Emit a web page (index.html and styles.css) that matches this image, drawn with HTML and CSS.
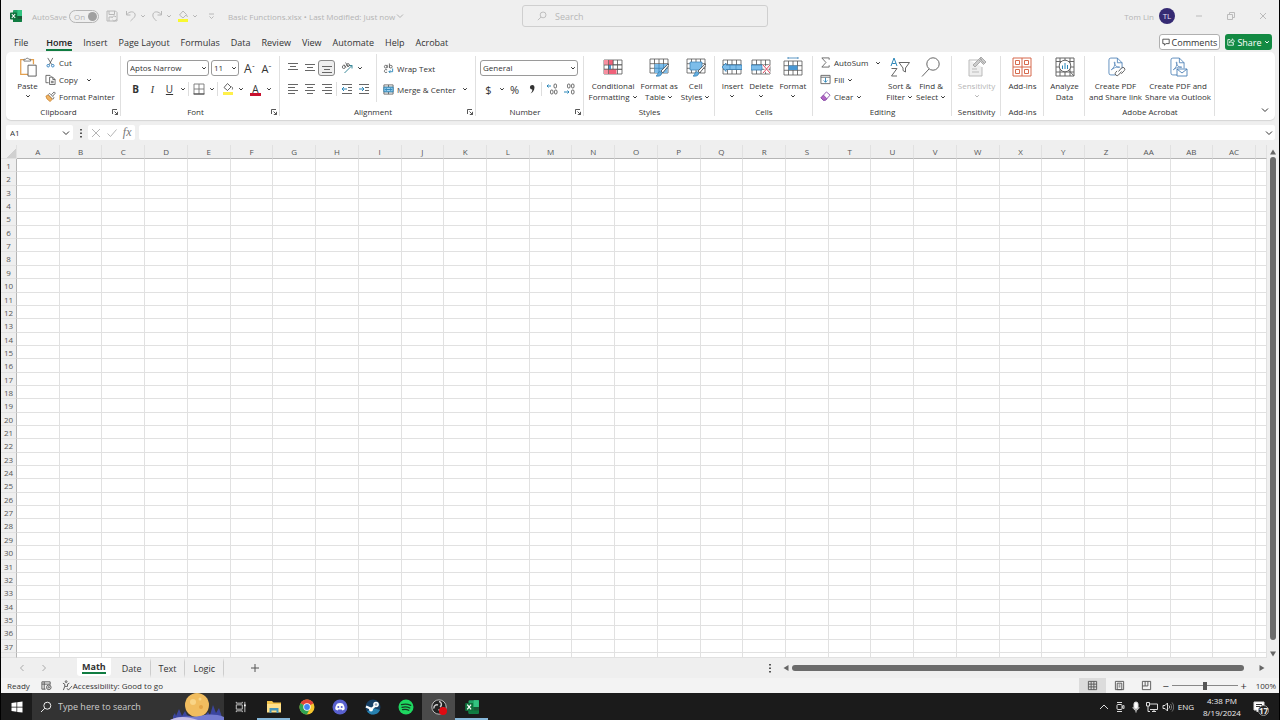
FILE: index.html
```html
<!DOCTYPE html>
<html lang="en">
<head>
    <meta charset="UTF-8">
    <meta name="viewport" content="width=device-width, initial-scale=1.0">
    <title>Basic Functions.xlsx</title>
    <link rel="stylesheet" href="styles.css">
</head>
<body>

    <!-- Shared icons -->
    <svg class="sprite" aria-hidden="true">
        <symbol id="caret" viewBox="0 0 6 6"><path d="M1.2 2.2 3 4l1.800-1.800" fill="none" stroke="currentColor"/></symbol>
        <symbol id="chevron" viewBox="0 0 10 10"><path d="M2 3.500 5 6.500 8 3.500" fill="none" stroke="currentColor"/></symbol>
        <symbol id="launcher" viewBox="0 0 8 8"><path d="M1.500 6V1.500H6M3.500 3.500 6.500 6.500M6.500 3.800V6.500H3.800" fill="none" stroke="#444" stroke-width=".9"/></symbol>
        <symbol id="xl" viewBox="0 0 14 14"><rect x="4" y="1" width="9" height="12" rx="1" fill="#21a366"/><path d="M8.500 1H13v6H8.500z" fill="#33c481"/><path d="M4 7h9v5a1 1 0 0 1-1 1H4z" fill="#107c41"/><path d="M8.500 7H13v3H8.500z" fill="#185c37"/><rect x="1" y="3.500" width="7" height="7" rx=".8" fill="#0f703b"/><path d="m2.800 5 3.400 4M6.200 5 2.800 9" stroke="#fff" stroke-width="1.100"/></symbol>
        <symbol id="lens" viewBox="0 0 12 12"><circle cx="7.300" cy="4.700" r="3.500" fill="none" stroke="currentColor"/><path d="M4.800 7.300 1 11" stroke="currentColor"/></symbol>
        <symbol id="table" viewBox="0 0 20 18"><path d="M1 2h18v14H1zM1 6.700h18M1 11.300h18M5.500 2v14M14.500 2v14M10 2v14" fill="#fff" stroke="#555" stroke-width=".8"/></symbol>
        <symbol id="brush" viewBox="0 0 14 14"><path d="M13.300.8 6 8l1.800 1.800 6-7.300z" fill="#fff" stroke="#444" stroke-width=".8"/><path d="M1 13c1.500-.6 1.500-2.500 2.500-3.800C5 8 7 9.300 6.500 11 6 13 3.500 13.500 1 13z" fill="#68b0e0" stroke="#2878b0" stroke-width=".7"/></symbol>
        <symbol id="pdf" viewBox="0 0 16 20"><path d="M8 19H3a2 2 0 0 1-2-2V3a2 2 0 0 1 2-2h7l5 5v6M10 1v5h5" fill="none" stroke="#4b7fb5" stroke-width=".9"/><path d="M3.500 13.500C6 12 8 8 7.300 5.500 6.500 4 6 7 9 10c1 1 3 1.500 3.500.8.3-1-4.500-.7-9 2.700z" fill="none" stroke="#4b7fb5" stroke-width=".8"/></symbol>
    </svg>

    <div class="window">

        <header class="titlebar">
            <div class="title-left">
                <svg class="logo" viewBox="0 0 14 14"><use href="#xl"/></svg>
                <label class="autosave">AutoSave
                    <span class="switch"><input type="checkbox" checked><span>On</span></span>
                </label>
                <button class="qat" aria-label="Save"><svg viewBox="0 0 12 12"><path d="M1 1h8.500L11 2.500V11H1zM3 1v3.500h5.500V1M3 11V7h3" /><path d="M6 8a2.200 2.200 0 0 1 4-1M10.500 9a2.200 2.200 0 0 1-4 1"/></svg></button>
                <button class="qat wide" aria-label="Undo"><svg viewBox="0 0 12 12"><path d="M1.500 1v4h4M1.500 5C4 1 9 1 10 4c.8 3-2 4.500-4.500 7"/></svg><svg class="caret"><use href="#caret"/></svg></button>
                <button class="qat wide" aria-label="Redo"><svg viewBox="0 0 12 12"><path d="M10.500 1v4h-4M10.500 5C8 1 3 1 2 4c-.8 3 1 4.500 3.500 7"/></svg><svg class="caret"><use href="#caret"/></svg></button>
                <button class="qat wide" aria-label="Fill color"><svg viewBox="0 0 12 12"><path d="M6 1 2.500 5 6 8l3.500-3.500zM9.500 5l1 2"/><path d="M1 10.500h10" class="yellow"/></svg><svg class="caret"><use href="#caret"/></svg></button>
                <button class="qat" aria-label="Customize"><svg viewBox="0 0 12 12"><path d="M3 4h5M3.500 6.500l2 2 2-2"/></svg></button>
                <span class="filename">Basic Functions.xlsx • Last Modified: Just now</span>
                <svg class="chev"><use href="#chevron"/></svg>
            </div>
            <label class="search"><svg><use href="#lens"/></svg><input type="text" placeholder="Search" aria-label="Search"></label>
            <div class="title-right">
                <span>Tom Lin</span>
                <span class="avatar">TL</span>
                <button aria-label="Minimize"><svg viewBox="0 0 10 10"><path d="M2 5h6"/></svg></button>
                <button aria-label="Restore"><svg viewBox="0 0 10 10"><path d="M1.500 3.500h5v5h-5zM3.500 3V1.500h5v5H7"/></svg></button>
                <button aria-label="Close"><svg viewBox="0 0 10 10"><path d="m2 2 6 6M8 2 2 8"/></svg></button>
            </div>
        </header>

        <nav class="menu">
            <a href="#" class="file">File</a>
            <a href="#" class="active">Home</a>
            <a href="#">Insert</a>
            <a href="#">Page Layout</a>
            <a href="#">Formulas</a>
            <a href="#">Data</a>
            <a href="#">Review</a>
            <a href="#">View</a>
            <a href="#">Automate</a>
            <a href="#">Help</a>
            <a href="#">Acrobat</a>
            <button class="comments"><svg viewBox="0 0 10 10"><path d="M1 1.500h8v5.500H5L3 9V7H1z"/></svg>Comments</button>
            <button class="share"><svg viewBox="0 0 10 10"><path d="M4 2H1v7h7V6M3 6c0-2 1.500-3 3.500-3V1L9.500 4l-3 2.500V5C5 5 4 5 3 6z"/></svg>Share<svg class="caret"><use href="#caret"/></svg></button>
        </nav>

        <section class="ribbon">
            <div class="group clipboard">
                <div class="tools">
                    <button class="big paste">
                        <svg viewBox="0 0 20 22"><path d="M6 3H2v16h8M12 3h4v5" fill="none" stroke="#e3a04f" stroke-width="1.400"/><path d="M5.500 4.500V2.500h2a1.800 1.800 0 0 1 3.400 0h2v2z" fill="#fff" stroke="#666" stroke-width=".9"/><path d="M10 9h9v12h-9z" fill="#fff" stroke="#555"/></svg>
                        <span>Paste</span><svg class="caret"><use href="#caret"/></svg>
                    </button>
                    <div class="stack">
                        <button class="cmd"><svg viewBox="0 0 12 12"><path d="m3 1 4.500 7.500M8.500 1 4.500 8.500" fill="none" stroke="#555" stroke-width=".9"/><circle cx="3.500" cy="9.500" r="1.400" fill="none" stroke="#2f7fc0"/><circle cx="8.500" cy="9.500" r="1.400" fill="none" stroke="#2f7fc0"/></svg>Cut</button>
                        <button class="cmd copy"><svg viewBox="0 0 12 12"><path d="M4 9.500H1v-8h4.500l1.500 1.500M5 3.500h3.500L11 6v5.500H5zM8.500 3.500V6H11M6.500 8h3M6.500 9.500h3" fill="none" stroke="#555" stroke-width=".9"/></svg>Copy<svg class="caret"><use href="#caret"/></svg></button>
                        <button class="cmd"><svg viewBox="0 0 12 12"><path d="m7 4 3-3 1.300 1.300L8.500 5.500" fill="#fff" stroke="#555" stroke-width=".9"/><path d="m5 2.500 5 5-1.500 1.500-5-5z" fill="#fff" stroke="#555" stroke-width=".8"/><path d="M3.500 4.500 1 5.500l1 3 3.500 3L8 9z" fill="#f0b465" stroke="#c77c22" stroke-width=".8"/></svg>Format Painter</button>
                    </div>
                </div>
                <h2>Clipboard</h2><button class="launch" aria-label="Clipboard settings"><svg><use href="#launcher"/></svg></button>
            </div>

            <div class="group font">
                <div class="rows">
                    <div class="row">
                        <span class="combo name"><select aria-label="Font"><option>Aptos Narrow</option></select><svg class="caret"><use href="#caret"/></svg></span>
                        <span class="combo size"><select aria-label="Font size"><option>11</option></select><svg class="caret"><use href="#caret"/></svg></span>
                        <button class="ico glyph large">A<sup>ˆ</sup></button>
                        <button class="ico glyph">A<sup>ˇ</sup></button>
                    </div>
                    <div class="row">
                        <button class="ico bold">B</button>
                        <button class="ico italic">I</button>
                        <button class="ico under">U</button>
                        <button class="drop" aria-label="Underline styles"><svg class="caret"><use href="#caret"/></svg></button>
                        <i class="sep"></i>
                        <button class="ico" aria-label="Borders"><svg viewBox="0 0 12 12"><path d="M1 1h10v10H1zM6 1v10M1 6h10" fill="none" stroke="#777" stroke-width=".9"/><path d="M.5 11h11" stroke="#444"/></svg></button>
                        <button class="drop" aria-label="Border styles"><svg class="caret"><use href="#caret"/></svg></button>
                        <i class="sep"></i>
                        <button class="ico" aria-label="Fill color"><svg viewBox="0 0 12 12"><path d="M5.500.5 2 4.500l3.500 3L9 4zM9.500 3.500c1.500 1 1 2.500.8 3" fill="none" stroke="#555" stroke-width=".9"/><path d="M1 9h10v3H1z" fill="#fff04a"/></svg></button>
                        <button class="drop" aria-label="Fill colors"><svg class="caret"><use href="#caret"/></svg></button>
                        <button class="ico fontcolor">A</button>
                        <button class="drop" aria-label="Font colors"><svg class="caret"><use href="#caret"/></svg></button>
                    </div>
                </div>
                <h2>Font</h2><button class="launch" aria-label="Font settings"><svg><use href="#launcher"/></svg></button>
            </div>

            <div class="group alignment">
                <div class="tools">
                    <div class="rows">
                        <div class="row">
                            <button class="ico" aria-label="Top align"><svg class="line" viewBox="0 0 12 12"><path d="M1 1.500h10M3 4.500h6M1 7.500h10"/></svg></button>
                            <button class="ico" aria-label="Middle align"><svg class="line" viewBox="0 0 12 12"><path d="M1 2.500h10M3 5.500h6M1 8.500h10"/></svg></button>
                            <button class="ico pressed" aria-label="Bottom align"><svg class="line" viewBox="0 0 12 12"><path d="M1 4.500h10M3 7.500h6M1 10.500h10"/></svg></button>
                            <i class="sep none"></i>
                            <button class="ico" aria-label="Orientation"><svg viewBox="0 0 12 12"><path d="M3.500 11 11 3.500M8 3.500h3v3" fill="none" stroke="#3c8a9a"/><circle cx="2.800" cy="5" r="1.500" fill="none" stroke="#555" stroke-width=".8"/><path d="m3 2.500 2 3M4.500.5l3 4.500" stroke="#555" stroke-width=".8"/><circle cx="7" cy="3" r="1.400" fill="none" stroke="#555" stroke-width=".8"/></svg></button>
                            <button class="drop" aria-label="Orientation options"><svg class="caret"><use href="#caret"/></svg></button>
                        </div>
                        <div class="row">
                            <button class="ico" aria-label="Align left"><svg class="line" viewBox="0 0 12 12"><path d="M1 1.500h10M1 4.500h7M1 7.500h10M1 10.500h7"/></svg></button>
                            <button class="ico" aria-label="Center"><svg class="line" viewBox="0 0 12 12"><path d="M1 1.500h10M3 4.500h6M1 7.500h10M3 10.500h6"/></svg></button>
                            <button class="ico" aria-label="Align right"><svg class="line" viewBox="0 0 12 12"><path d="M1 1.500h10M4 4.500h7M1 7.500h10M4 10.500h7"/></svg></button>
                            <i class="sep"></i>
                            <button class="ico" aria-label="Decrease indent"><svg class="line" viewBox="0 0 12 12"><path d="M1 1.500h10M7 4.500h4M7 7.500h4M1 10.500h10"/><path class="blue" d="M6 6H1M3 4 1 6l2 2"/></svg></button>
                            <button class="ico" aria-label="Increase indent"><svg class="line" viewBox="0 0 12 12"><path d="M1 1.500h10M7 4.500h4M7 7.500h4M1 10.500h10"/><path class="blue" d="M1 6h5M4 4l2 2-2 2"/></svg></button>
                        </div>
                    </div>
                    <div class="rows wrapcol">
                        <button class="cmd"><svg viewBox="0 0 12 12"><circle cx="3" cy="4" r="1.500"/><path d="M4.500 2v3.500M7 .5v5"/><circle cx="8.500" cy="4" r="1.500"/><path d="M4.500 7.500C2 6.500 1.500 8 1.500 9s1 2 3 1"/><path class="blue" d="M10.500 6v3.500h-4M8 8 6.500 9.500 8 11"/></svg>Wrap Text</button>
                        <button class="cmd"><svg viewBox="0 0 12 12"><path d="M1 1h10v10H1zM1 3.500h10M1 8.500h10M6 1v2.500M6 8.500V11"/><path d="M1 3.500h10v5H1z" class="bluefill"/><path d="M2.500 6h7M4 4.500 2.500 6 4 7.500M8 4.500 9.500 6 8 7.500" class="blue"/></svg>Merge &amp; Center<svg class="caret"><use href="#caret"/></svg></button>
                    </div>
                </div>
                <h2>Alignment</h2><button class="launch" aria-label="Alignment settings"><svg><use href="#launcher"/></svg></button>
            </div>

            <div class="group number">
                <div class="rows">
                    <div class="row"><span class="combo format"><select aria-label="Number format"><option>General</option></select><svg class="caret"><use href="#caret"/></svg></span></div>
                    <div class="row">
                        <button class="ico sign">$</button>
                        <button class="drop" aria-label="Currencies"><svg class="caret"><use href="#caret"/></svg></button>
                        <button class="ico sign">%</button>
                        <button class="ico" aria-label="Comma style"><svg viewBox="0 0 12 12"><path d="M8.500 4C8.500 7 7 9.500 4.500 10.500 6 9 6.300 8 6.300 6.500A2.300 2.300 0 1 1 8.500 4z" fill="#333"/></svg></button>
                        <i class="sep"></i>
                        <button class="ico" aria-label="Increase decimal"><svg viewBox="0 0 12 12" class="thin"><path class="blue" d="M5 3H1M2.500 1.500 1 3l1.500 1.500"/><rect x="8" y="1" width="2.500" height="4" rx="1.200"/><rect x="4.500" y="7" width="2.500" height="4" rx="1.200"/><rect x="8.500" y="7" width="2.500" height="4" rx="1.200"/></svg></button>
                        <button class="ico" aria-label="Decrease decimal"><svg viewBox="0 0 12 12" class="thin"><path class="blue" d="M1 9h5M4.500 7.500 6 9l-1.500 1.500"/><rect x="4.500" y="1" width="2.500" height="4" rx="1.200"/><rect x="8.500" y="1" width="2.500" height="4" rx="1.200"/><rect x="8.500" y="7" width="2.500" height="4" rx="1.200"/></svg></button>
                    </div>
                </div>
                <h2>Number</h2><button class="launch" aria-label="Number settings"><svg><use href="#launcher"/></svg></button>
            </div>

            <div class="group styles">
                <div class="tools">
                    <button class="big"><svg viewBox="0 0 20 20"><use href="#table" y="1" width="20" height="18"/><path d="M5.500 3h4.500v5H5.500zM5.500 12.300h8V17h-8z" fill="#f0627a"/><path d="M1 3h4.500v5H1zM1 12.300h4.500V17H1z" fill="#f78fa0"/><path d="M5.500 8H8v4.300H5.500z" fill="#4a98d4"/><path d="M1 8h18M1 12.300h18M5.500 3v14M10 3v5" fill="none" stroke="#555" stroke-width=".6"/></svg><span>Conditional<br>Formatting<svg class="caret"><use href="#caret"/></svg></span></button>
                    <button class="big"><svg viewBox="0 0 20 20"><use href="#table" y="0" width="20" height="18"/><path d="M5.500 7h13v9h-13z" fill="#7dbdea"/><path d="M5.500 11.300h13M10 7v9M14.500 7v9" stroke="#367fb5" stroke-width=".7"/><use href="#brush" x="6" y="6" width="14" height="14"/></svg><span>Format as<br>Table<svg class="caret"><use href="#caret"/></svg></span></button>
                    <button class="big"><svg viewBox="0 0 20 20"><use href="#table" y="0" width="20" height="18"/><path d="M4 5h12v8H4z" fill="#7dbdea" stroke="#367fb5" stroke-width=".7"/><use href="#brush" x="6" y="6" width="14" height="14"/></svg><span>Cell<br>Styles<svg class="caret"><use href="#caret"/></svg></span></button>
                </div>
                <h2>Styles</h2>
            </div>

            <div class="group cells">
                <div class="tools">
                    <button class="big"><svg viewBox="0 0 20 20"><use href="#table" y="1" width="20" height="18"/><path d="M0 10l4-4v2h16v4.500H4v2z" fill="#7dbdea" stroke="#367fb5" stroke-width=".8"/><path d="M8 8v4.500M14 8v4.500" stroke="#367fb5" stroke-width=".6"/></svg><span>Insert</span><svg class="caret"><use href="#caret"/></svg></button>
                    <button class="big"><svg viewBox="0 0 20 20"><use href="#table" y="1" width="20" height="18"/><path d="M0 8h11v5H0z" fill="#7dbdea" stroke="#367fb5" stroke-width=".8"/><path d="m12 8 7 8M19 8l-7 8" stroke="#fff" stroke-width="2.500"/><path d="m12 8 7 8M19 8l-7 8" stroke="#e0475f"/></svg><span>Delete</span><svg class="caret"><use href="#caret"/></svg></button>
                    <button class="big"><svg viewBox="0 0 20 20"><use href="#table" y="2" width="20" height="18"/><path d="M5.500 8.500h9V13h-9z" fill="#4a98d4"/><path d="M5 1h10M5 0v2M15 0v2" stroke="#367fb5" stroke-width=".8"/></svg><span>Format</span><svg class="caret"><use href="#caret"/></svg></button>
                </div>
                <h2>Cells</h2>
            </div>

            <div class="group editing">
                <div class="tools">
                    <div class="stack">
                        <button class="cmd sum"><svg viewBox="0 0 12 12"><path d="M10 3V1H2l4.500 5L2 11h8V9"/></svg>AutoSum<svg class="caret"><use href="#caret"/></svg></button>
                        <button class="cmd"><svg viewBox="0 0 12 12"><path d="M1 1.500h10v9H1zM1 3.500h10"/><path class="blue" d="M6 4v5M4 7l2 2 2-2"/></svg>Fill<svg class="caret"><use href="#caret"/></svg></button>
                        <button class="cmd"><svg viewBox="0 0 12 12"><path d="m7 1 4 3.500L6 10H3.500L1 7.500z" fill="#fff" stroke="#8b4fa8"/><path d="M3.800 4.500 7.500 8.500 6 10H3.500L1 7.500z" fill="#b566c7" stroke="#8b4fa8"/></svg>Clear<svg class="caret"><use href="#caret"/></svg></button>
                    </div>
                    <button class="big"><svg viewBox="0 0 20 20" class="thin"><path class="blue" d="m1 9 3-8 3 8M2.200 6.500h3.600"/><path d="M1.500 11.500H7L1.500 19H7"/><path d="M9 5.500h10.500L15.500 11v4l-2.500-1.500V11z"/></svg><span>Sort &amp;<br>Filter<svg class="caret"><use href="#caret"/></svg></span></button>
                    <button class="big"><svg viewBox="0 0 20 20" class="thin"><circle cx="12" cy="7" r="6.200"/><path d="M8 12 1 19.500"/></svg><span>Find &amp;<br>Select<svg class="caret"><use href="#caret"/></svg></span></button>
                </div>
                <h2>Editing</h2>
            </div>

            <div class="group sensitivity">
                <div class="tools">
                    <button class="big" disabled><svg viewBox="0 0 20 20"><path d="M2 3h9M2 3v16h13v-9" fill="#eee" stroke="#bbb"/><path d="M5 12h5M5 15h7" stroke="#bbb"/><path d="m6 8 7-7 2 2-7 7zM12 1l6 6M14 0l5 5-2.500 2.500-5-5z" fill="#ccc" stroke="#aaa"/></svg><span>Sensitivity</span><svg class="caret"><use href="#caret"/></svg></button>
                </div>
                <h2>Sensitivity</h2>
            </div>

            <div class="group addins">
                <div class="tools">
                    <button class="big"><svg viewBox="0 0 20 20"><path d="M1 1h18v18H1zM10 1v18M1 10h18M3.500 3.500h4v4h-4zM12.500 3.500h4v4h-4zM3.500 12.500h4v4h-4zM12.500 12.500h4v4h-4z" fill="none" stroke="#d6694c"/></svg><span>Add-ins</span></button>
                </div>
                <h2>Add-ins</h2>
            </div>

            <div class="group analyze">
                <div class="tools">
                    <button class="big"><svg viewBox="0 0 20 20" class="thin"><path d="M1 1h18v18H1zM1 4.500h18M1 10h18M1 15h18M5 1v18M10 1v18M15 1v18"/><circle cx="10" cy="9" r="5.800" fill="#fff"/><path d="m14 13.500 5 5.500"/><path class="blue" d="M7.500 12V8.500M10 12V6M12.500 12V8"/></svg><span>Analyze<br>Data</span></button>
                </div>
            </div>

            <div class="group acrobat">
                <div class="tools">
                    <button class="big"><svg viewBox="0 0 20 20"><use href="#pdf" x="2" width="15" height="19"/><path d="M12.500 14.500 15.500 11a1.900 1.900 0 0 1 2.800 2.600l-3 3.200M15.500 14.500l-3 3.500a1.900 1.900 0 0 1-2.800-2.600l1.300-1.500" fill="none" stroke="#555" stroke-width=".9"/></svg><span>Create PDF<br>and Share link</span></button>
                    <button class="big"><svg viewBox="0 0 20 20"><use href="#pdf" x="2" width="15" height="19"/><path d="M9 12h10v7H9zl5 4 5-4" fill="#fff" stroke="#4b7fb5" stroke-width=".9"/></svg><span>Create PDF and<br>Share via Outlook</span></button>
                </div>
                <h2>Adobe Acrobat</h2>
            </div>
            <button class="collapse" aria-label="Collapse ribbon"><svg class="chev"><use href="#chevron"/></svg></button>
        </section>

        <section class="formula">
            <label class="namebox"><input type="text" value="A1" aria-label="Name box"><svg class="chev"><use href="#chevron"/></svg></label>
            <svg class="dots" viewBox="0 0 4 12"><path d="M1 2h2v1.500H1zM1 5.500h2V7H1zM1 9h2v1.500H1z"/></svg>
            <div class="entry">
                <button aria-label="Cancel"><svg viewBox="0 0 10 10"><path d="m1 1 8 8M9 1 1 9"/></svg></button>
                <button aria-label="Enter"><svg viewBox="0 0 10 10"><path d="m.5 5.500 3 3L9.500 1.500"/></svg></button>
                <button class="fx">fx</button>
            </div>
            <label class="fbox"><input type="text" aria-label="Formula bar"><svg class="chev"><use href="#chevron"/></svg></label>
        </section>

        <main class="sheet">
            <table class="grid">
                <thead><tr id="columns"></tr></thead>
                <tbody id="cells"></tbody>
            </table>
            <div class="vscroll">
                <svg viewBox="0 0 8 8"><path d="M1 6.500 4 1.500l3 5z"/></svg>
                <div class="thumb"></div>
                <svg viewBox="0 0 8 8"><path d="M1 1.500 4 6.500l3-5z"/></svg>
            </div>
        </main>

        <nav class="sheets">
            <button class="arrow" aria-label="Previous sheet"><svg viewBox="0 0 10 10"><path d="M6.500 2 3.500 5l3 3"/></svg></button>
            <button class="arrow" aria-label="Next sheet"><svg viewBox="0 0 10 10"><path d="m3.500 2 3 3-3 3"/></svg></button>
            <div class="names">
                <button class="current"><span>Math</span></button>
                <button>Date</button>
                <button>Text</button>
                <button>Logic</button>
            </div>
            <button class="add" aria-label="New sheet"><svg viewBox="0 0 10 10"><path d="M5 1v8M1 5h8"/></svg></button>
            <div class="hscroll">
                <svg class="dots" viewBox="0 0 4 12"><path d="M1 2h2v1.500H1zM1 5.500h2V7H1zM1 9h2v1.500H1z"/></svg>
                <svg class="tri" viewBox="0 0 8 8"><path d="M6.500 1 1.500 4l5 3z"/></svg>
                <div class="thumb"></div>
                <svg class="tri" viewBox="0 0 8 8"><path d="M1.500 1 6.500 4l-5 3z"/></svg>
            </div>
        </nav>

        <footer class="status">
            <span class="ready">Ready</span>
            <svg class="macro" viewBox="0 0 12 12"><path d="M1 2h9v3M1 2v8h4M1 4.500h9M3.500 2v8"/><circle cx="8.500" cy="8" r="2.500"/><circle cx="8.500" cy="8" r=".8"/></svg>
            <svg class="access" viewBox="0 0 12 12"><circle cx="4.500" cy="1.800" r="1"/><path d="M1 3.500 3 4.500v2.500L1.500 11M8 3.500 6 4.500V7M3 7h3"/><path d="M5.500 9 7 11l4-4.500"/></svg>
            <span>Accessibility: Good to go</span>
            <div class="views">
                <button class="on" aria-label="Normal"><svg viewBox="0 0 12 12"><path d="M1.500 1.500h9v9h-9zM4.500 1.500v9M7.500 1.500v9M1.500 4.500h9M1.500 7.500h9"/></svg></button>
                <button aria-label="Page layout"><svg viewBox="0 0 12 12"><path d="M1.500 1.500h9v9h-9zM3.500 3.500h5v7h-5zM5 5.500h2M5 7.500h2"/></svg></button>
                <button aria-label="Page break preview"><svg viewBox="0 0 12 12"><path d="M1.500 1.500h9v9h-9zM4.500 1.500v5h3v-5M1.500 6.500h3"/></svg></button>
            </div>
            <button class="zoom" aria-label="Zoom out">−</button>
            <input type="range" min="0" max="100" value="50" aria-label="Zoom">
            <button class="zoom" aria-label="Zoom in">+</button>
            <span class="percent">100%</span>
        </footer>

        <div class="taskbar">
            <button class="start" aria-label="Start"><svg viewBox="0 0 12 12"><path d="m.5 2 5-.7v4.400h-5zM6.200 1.200 11.500.5v5.200H6.200zM.5 6.400h5v4.400l-5-.7zM6.200 6.400h5.300v5.200l-5.300-.7z" fill="#fff"/></svg></button>
            <label class="find">
                <svg class="lens"><use href="#lens"/></svg>
                <input type="text" placeholder="Type here to search" aria-label="Type here to search">
                <svg class="moon" viewBox="0 0 54 27"><circle cx="27" cy="12" r="12" fill="#f1bd5f"/><circle cx="23" cy="9" r="3" fill="#f9d587"/><circle cx="31" cy="14" r="2" fill="#e3a344"/><circle cx="30" cy="6" r="1.500" fill="#f9d587"/><path d="M3 27v-4l2-3 1 3 3-7 3 7 3-5 2 4 5 2h12l4-5 2 3 3-10 3 8 3-5 3 9v3z" fill="#3b459f"/><path d="M0 27c12-6 22-2 30-4s16-2 24 1v3z" fill="#747bd0"/><path d="M0 27c8-4 16-4 28 0z" fill="#c5bde6"/></svg>
            </label>
            <button class="app" aria-label="Task view"><svg viewBox="0 0 14 14"><path d="M1.500 4.500h7v5h-7zM1.500 1v1.500h7V1M1.500 13v-1.500h7V13M11.500 1v12" fill="none" stroke="#ddd"/><path d="M10.500 4h2v2h-2z" fill="#fff"/></svg></button>
            <button class="app open" aria-label="File Explorer"><svg viewBox="0 0 16 16"><path d="M1 2h5l1.500 1.500H15V13H1z" fill="#f3c34b"/><path d="M1 5h14v8.500H1z" fill="#ffe08a"/><path d="M3.500 14V9h9v5h-2v-2.500h-5V14z" fill="#4796ba"/></svg></button>
            <button class="app" aria-label="Chrome"><svg viewBox="0 0 16 16"><circle cx="8" cy="8" r="7.500" fill="#f6c62d"/><path d="M8 8 1.500 4.200A7.500 7.500 0 0 1 14.500 4.200z" fill="#e2443a"/><path d="M8 8 1.500 4.200A7.500 7.500 0 0 0 7.800 15.500L11 9.500z" fill="#30a353"/><circle cx="8" cy="8" r="3.700" fill="#fff"/><circle cx="8" cy="8" r="2.900" fill="#4284f3"/></svg></button>
            <button class="app" aria-label="Discord"><svg viewBox="0 0 16 16"><circle cx="8" cy="8" r="7.500" fill="#5961cf"/><path d="M5 4.700c2-.8 4-.8 6 0 1.300 2 1.800 3.600 1.700 5.500-.7.700-1.500 1-2.300 1.200l-.7-1H6.300l-.7 1c-.8-.2-1.600-.5-2.300-1.200-.1-2 .4-3.500 1.700-5.500z" fill="#fff"/><circle cx="6.300" cy="8" r="1" fill="#5961cf"/><circle cx="9.700" cy="8" r="1" fill="#5961cf"/></svg></button>
            <button class="app" aria-label="Steam"><svg viewBox="0 0 16 16"><circle cx="8" cy="8" r="7.500" fill="#163f64"/><path d="M2 12.500a7.500 7.500 0 0 0 13-1.500L8 9z" fill="#2781b0"/><path d="M1 7.500 6.500 10 11 6" fill="none" stroke="#fff" stroke-width="2.200"/><circle cx="11" cy="5.500" r="2.800" fill="#fff"/><circle cx="11" cy="5.500" r="1.300" fill="#8fa4b8"/><circle cx="6" cy="10.500" r="2" fill="#fff"/></svg></button>
            <button class="app" aria-label="Spotify"><svg viewBox="0 0 16 16"><circle cx="8" cy="8" r="7.500" fill="#1ed760"/><path d="M3.500 5.700c3-1 6.500-.7 9.200.7M4 8.300c2.700-.8 5.500-.5 7.800.7M4.500 10.700c2.300-.6 4.500-.4 6.300.6" fill="none" stroke="#153a22" stroke-width="1.300" stroke-linecap="round"/></svg></button>
            <button class="app active" aria-label="OBS Studio"><svg viewBox="0 0 16 16"><circle cx="8" cy="8" r="7.200" fill="#222" stroke="#bbb"/><path d="M8 2.500a3 3 0 0 1 1 5.500M12.500 8a3 3 0 0 1-5 2.500M3 9.500A3 3 0 0 1 7 6" fill="none" stroke="#ccc" stroke-width="1.500"/><circle cx="12" cy="12" r="4" fill="#e00b12"/></svg></button>
            <button class="app open" aria-label="Excel"><svg viewBox="0 0 14 14"><use href="#xl"/></svg></button>
            <div class="tray">
                <svg viewBox="0 0 12 12"><path d="m2 8 4-4 4 4"/></svg>
                <svg viewBox="0 0 12 12"><rect x="3" y="3.500" width="5" height="5" rx="1"/><path d="m8 5.500 2-1v3l-2-1M3 1.500h5M3 10.500h5"/></svg>
                <svg viewBox="0 0 12 12"><rect x="4" y="1" width="4" height="7" rx="2" fill="#fff"/><path d="M3 6c0 4 6 4 6 0M6 9v2.500"/></svg>
                <svg viewBox="0 0 12 12"><path d="M4 3h7.500v5.500H4M6 10.500h4M8 8.500v2M.5 1.500h3V5h-3zM2 5v5.500h2"/></svg>
                <svg viewBox="0 0 12 12"><path d="M1 4.500h2L5.500 2v8L3 7.500H1zM7 4.500c.8 1 .8 2 0 3"/><path class="faint" d="M8.500 3c1.500 2 1.500 4 0 6M10 1.500c2.300 3 2.300 6 0 9"/></svg>
                <span>ENG</span>
                <time>4:38 PM<br>8/19/2024</time>
                <span class="note"><svg viewBox="0 0 12 12"><path d="M1 1h10v8H6L4 11V9H1z" fill="#fff"/><path d="M3 3.500h6M3 5.500h6" stroke="#333"/></svg><b>17</b></span>
            </div>
        </div>
    </div>

    <script>
        var COLUMN_COUNT = 29;
        var ROW_COUNT = 38;

        function columnName(index) {
            var letter = String.fromCharCode(65 + index % 26);
            return index < 26 ? letter : 'A' + letter;
        }

        function headerCell(text, scope) {
            var th = document.createElement('th');
            th.scope = scope;
            th.textContent = text;
            return th;
        }

        var columns = document.getElementById('columns');
        var corner = document.createElement('td');
        corner.className = 'corner';
        columns.appendChild(corner);
        for (var c = 0; c < COLUMN_COUNT; c++) {
            columns.appendChild(headerCell(columnName(c), 'col'));
        }
        columns.appendChild(headerCell('', 'col'));

        var cells = document.getElementById('cells');
        for (var r = 1; r <= ROW_COUNT; r++) {
            var row = cells.insertRow();
            row.appendChild(headerCell(r, 'row'));
            for (var i = 0; i <= COLUMN_COUNT; i++) {
                row.insertCell();
            }
        }
    </script>

</body>
</html>
```

FILE: styles.css
```css
* {
    box-sizing: border-box;
}

body {
    margin: 0;
    font-family: "Open Sans", "Noto Sans", sans-serif;
    font-size: 8px;
    line-height: 11px;
    color: #333;
    background: #efefef;
}

button,
input,
select {
    margin: 0;
    padding: 0;
    border: 0;
    background: none;
    font: inherit;
    color: inherit;
    outline: none;
}

button {
    display: flex;
    align-items: center;
    justify-content: center;
}

a {
    color: inherit;
    text-decoration: none;
}

svg {
    flex: none;
}

.sprite {
    display: none;
}

.caret {
    width: 6px;
    height: 6px;
}

.chev {
    width: 10px;
    height: 10px;
}

.window {
    display: flex;
    flex-direction: column;
    height: 100vh;
    overflow: hidden;
    border-left: 1px solid #000;
    border-right: 1px solid #000;
}

/* Title bar */
.titlebar {
    display: grid;
    grid-template-columns: 1fr 246px calc(50% - 124px);
    align-items: center;
    height: 32px;
    flex: none;
    padding-left: 8px;
    color: #b4b4b4;
}

.title-left,
.title-right {
    display: flex;
    align-items: center;
}

.logo {
    width: 14px;
    height: 14px;
}

.autosave {
    display: flex;
    align-items: center;
    gap: 2px;
    margin-left: 9px;
}

.switch {
    position: relative;
    display: flex;
    align-items: center;
    width: 30px;
    height: 13px;
    padding-left: 4px;
    border: 1px solid #b4b4b4;
    border-radius: 7px;
}

.switch input {
    appearance: none;
    position: absolute;
    right: 1px;
    width: 9px;
    height: 9px;
    border-radius: 50%;
    background: #a0a0a0;
}

.qat {
    width: 18px;
    margin-left: 4px;
}

.qat.wide {
    width: 22px;
    gap: 3px;
}

.qat svg:first-child {
    width: 12px;
    height: 12px;
    fill: none;
    stroke: #b8b8b8;
}

.qat .yellow {
    stroke: #f8f830;
    stroke-width: 3;
}

.filename {
    margin-left: 7px;
    white-space: nowrap;
}

.search {
    display: flex;
    align-items: center;
    gap: 8px;
    height: 22px;
    padding-left: 14px;
    border: 1px solid #cfcfcf;
    border-radius: 3px;
    font-size: 9px;
}

.search svg {
    width: 10px;
    height: 10px;
}

.search input {
    flex: 1;
    min-width: 0;
}

.search input::placeholder {
    color: #b8b8b8;
}

.title-right {
    justify-content: flex-end;
}

.title-right button {
    width: 32px;
}

.title-right svg {
    width: 10px;
    height: 10px;
    fill: none;
    stroke: #bbb;
}

.avatar {
    width: 16px;
    height: 16px;
    margin: 0 8px 0 5px;
    border-radius: 50%;
    background: #352a73;
    color: #e6e2f5;
    line-height: 16px;
    text-align: center;
}

/* Ribbon tabs */
.menu {
    display: flex;
    align-items: center;
    gap: 11px;
    height: 20px;
    flex: none;
    padding: 0 7px 0 13px;
    font-size: 9px;
}

.menu a {
    height: 17px;
    line-height: 17px;
    border-bottom: 2px solid transparent;
    white-space: nowrap;
}

.menu .file {
    margin-right: 7px;
}

.menu .active {
    border-bottom-color: #107c41;
    color: #222;
    font-weight: 600;
}

.comments,
.share {
    gap: 2px;
    height: 16px;
    border-radius: 3px;
}

.comments svg:first-child,
.share svg:first-child {
    width: 8px;
    height: 8px;
    fill: none;
    stroke: currentColor;
}

.comments {
    width: 61px;
    margin-left: auto;
    border: 1px solid #b0b0b0;
    background: #fff;
}

.share {
    width: 47px;
    margin-left: -6px;
    background: #138a43;
    color: #fff;
}

/* Ribbon */
.ribbon {
    display: flex;
    height: 68px;
    flex: none;
    margin: 0 4px 0 5px;
    border-radius: 5px;
    background: #fff;
    box-shadow: 0 1px 1px #d4d4d4;
}

.group {
    position: relative;
    display: flex;
    flex-direction: column;
    flex: none;
    padding: 2px 0;
}

.group::after {
    content: "";
    position: absolute;
    top: 4px;
    right: 0;
    bottom: 4px;
    width: 1px;
    background: #e0e0e0;
}

.group h2 {
    margin: 0;
    font-size: 8px;
    font-weight: 400;
    line-height: 12px;
    text-align: center;
}

.clipboard h2,
.font h2,
.alignment h2,
.number h2 {
    padding-right: 10px;
}

.launch {
    position: absolute;
    right: 2px;
    bottom: 4px;
}

.launch svg {
    width: 8px;
    height: 8px;
}

.clipboard {
    width: 115px;
}

.font {
    width: 159px;
}

.alignment {
    width: 196px;
}

.number {
    width: 108px;
}

.styles {
    width: 131px;
}

.cells {
    width: 98px;
}

.editing {
    width: 139px;
}

.sensitivity {
    width: 49px;
}

.addins {
    width: 43px;
}

.analyze {
    width: 41px;
}

.acrobat {
    width: 130px;
}

.tools {
    display: flex;
    justify-content: center;
    height: 52px;
}

.rows {
    display: flex;
    flex-direction: column;
    gap: 5px;
    height: 52px;
    padding: 6px 0 0 4px;
}

.font .rows {
    padding-left: 6px;
}

.row {
    display: flex;
    align-items: center;
    height: 16px;
}

.big {
    flex-direction: column;
    justify-content: flex-start;
    padding-top: 3px;
    line-height: 11px;
    white-space: nowrap;
}

.big > svg:first-child {
    width: 20px;
    height: 20px;
    margin-bottom: 3px;
}

.big span .caret {
    margin-left: 2px;
}

.big > .caret {
    margin-top: 2px;
}

.big:disabled {
    color: #b5b5b5;
}

.stack {
    display: flex;
    flex-direction: column;
    align-items: flex-start;
}

.cmd {
    gap: 3px;
    height: 17px;
    white-space: nowrap;
}

.cmd svg:first-child {
    width: 11px;
    height: 11px;
    fill: none;
    stroke: #666;
}

.clipboard .tools {
    justify-content: flex-start;
    gap: 3px;
    padding-left: 7px;
}

.paste {
    width: 29px;
}

.clipboard .copy .caret {
    margin-left: 5px;
}

.combo {
    position: relative;
    display: flex;
    height: 16px;
    margin-right: 2px;
}

.combo select {
    appearance: none;
    width: 100%;
    padding: 0 0 1px 2px;
    border: 1px solid #9a9a9a;
    border-radius: 3px;
    background: #fff;
}

.combo .caret {
    position: absolute;
    top: 5px;
    right: 2px;
    pointer-events: none;
}

.combo.name {
    width: 82px;
}

.combo.size {
    width: 28px;
}

.combo.format {
    width: 98px;
}

.ico {
    width: 17px;
    height: 16px;
}

.ico svg {
    width: 12px;
    height: 12px;
}

.drop {
    width: 9px;
    height: 16px;
}

.sep {
    width: 1px;
    height: 14px;
    margin: 0 1px;
    background: #ddd;
}

.sep.none {
    background: none;
}

.glyph,
.sign {
    font-size: 11px;
}

.glyph.large {
    font-size: 12px;
}

.glyph sup {
    font-size: 8px;
    line-height: 8px;
}

.bold {
    font-size: 10px;
    font-weight: 700;
}

.italic {
    font-family: "Liberation Serif", serif;
    font-size: 10px;
    font-style: italic;
}

.under {
    font-size: 10px;
    text-decoration: underline;
}

.fontcolor {
    margin-left: 2px;
    font-size: 10px;
}

.fontcolor::after {
    content: "";
    position: absolute;
    width: 11px;
    height: 3px;
    margin-top: 10px;
    background: #c8102e;
}

.pressed {
    border: 1px solid #888;
    border-radius: 3px;
    background: #eee;
}

.line,
.thin,
.line .blue {
    fill: none;
    stroke: #666;
    stroke-width: 1;
}

.alignment .tools {
    justify-content: flex-start;
}

.wrapcol {
    align-items: flex-start;
    margin-left: 4px;
}

.alignment .rows + .rows {
    height: 48px;
    padding-left: 6px;
    border-left: 1px solid #e0e0e0;
}

.wrapcol .cmd {
    height: 16px;
}

.wrapcol .cmd .caret {
    margin-left: 3px;
}

.ribbon svg .blue,
.ribbon .blue {
    fill: none;
    stroke: #2a86b8;
}

.bluefill {
    fill: #9fd0f0;
    stroke: #2a86b8;
}

.styles .tools {
    gap: 3px;
}

.cells .tools {
    gap: 6px;
}

.editing .tools {
    justify-content: flex-start;
    gap: 3px;
    padding-left: 7px;
}

.editing .stack {
    margin-right: 2px;
}

.sum .caret {
    margin-left: 4px;
}

.acrobat .tools {
    gap: 3px;
}

.collapse {
    align-self: flex-end;
    margin: 0 5px 5px auto;
}

/* Formula bar */
.formula {
    display: flex;
    align-items: center;
    height: 25px;
    flex: none;
    padding: 0 4px 0 5px;
}

.namebox,
.entry,
.fbox {
    display: flex;
    align-items: center;
    height: 15px;
    border-radius: 2px;
    background: #fff;
}

.namebox {
    width: 67px;
    padding: 0 2px 0 4px;
}

.namebox input,
.fbox input {
    flex: 1;
    min-width: 0;
}

.dots {
    width: 4px;
    height: 12px;
    fill: #555;
}

.formula .dots {
    margin: 0 5px 0 6px;
}

.entry {
    width: 47px;
    margin-right: 4px;
}

.entry button {
    flex: 1;
}

.entry svg {
    width: 10px;
    height: 10px;
    fill: none;
    stroke: #b5b5b5;
}

.entry .fx {
    color: #777;
    font-family: "Liberation Serif", serif;
    font-size: 12px;
    font-style: italic;
}

.fbox {
    flex: 1;
    padding-right: 1px;
}

/* Sheet */
.sheet {
    display: flex;
    flex: 1;
    min-height: 0;
}

.grid {
    display: grid;
    grid-template-columns: 16px repeat(29, minmax(0, 1fr)) 11px;
    grid-template-rows: 14px repeat(37, minmax(0, 1fr)) 5px;
    flex: 1;
    min-width: 0;
    overflow: hidden;
    background: #fff;
}

.grid thead,
.grid tbody,
.grid tr {
    display: contents;
}

.grid th,
.grid td {
    min-width: 0;
    min-height: 0;
    padding: 0;
    overflow: hidden;
    border-right: 1px solid #e1e1e1;
    border-bottom: 1px solid #e1e1e1;
}

.grid th {
    background: #efefef;
    color: #555;
    font-weight: 400;
    line-height: 13px;
    text-align: center;
}

.grid thead th {
    border-bottom-color: #b5b5b5;
}

.grid tbody th {
    border-right-color: #b5b5b5;
}

.grid .corner {
    background: linear-gradient(135deg, #efefef 65%, #d0d0d0 65%);
}

.vscroll {
    display: flex;
    flex-direction: column;
    align-items: center;
    width: 12px;
    padding-top: 3px;
}

.vscroll svg,
.tri {
    width: 8px;
    height: 8px;
    fill: #666;
}

.thumb {
    flex: 1;
    border-radius: 3px;
    background: #6b6b6b;
}

.vscroll .thumb {
    width: 6px;
    margin: 1px 0 10px;
}

/* Sheet tabs */
.sheets {
    display: flex;
    align-items: center;
    height: 20px;
    flex: none;
    padding-left: 10px;
    font-size: 9px;
}

.arrow,
.add {
    width: 22px;
}

.arrow svg,
.add svg {
    width: 10px;
    height: 10px;
    fill: none;
    stroke: #aaa;
}

.add svg {
    stroke: #555;
}

.names {
    display: flex;
    align-self: stretch;
    margin-left: 22px;
}

.names button {
    padding: 0 8px;
    border-right: 1px solid #ccc;
    border-block: 4px solid #efefef;
}

.names .current {
    align-self: flex-start;
    height: 18px;
    margin-right: 3px;
    padding: 0 5px;
    border: 0;
    border-radius: 0 0 3px 3px;
    background: #fff;
    font-weight: 700;
}

.current span {
    border-bottom: 2px solid #107c41;
}

.add {
    margin-left: 20px;
}

.hscroll {
    display: flex;
    align-items: center;
    width: calc(40% + 4px);
    margin-left: auto;
    padding-right: 13px;
}

.hscroll .dots {
    margin-right: 10px;
}

.hscroll .thumb {
    height: 6px;
    margin: 0 14px 0 2px;
}

/* Status bar */
.status {
    display: flex;
    align-items: center;
    height: 15px;
    flex: none;
    padding: 0 3px 0 6px;
    background: #f3f3f3;
}

.status svg {
    width: 11px;
    height: 11px;
    fill: none;
    stroke: #555;
}

.macro {
    margin: 0 10px 0 11px;
}

.views {
    display: flex;
    align-self: stretch;
    margin-left: auto;
}

.views button {
    width: 27px;
}

.views .on {
    background: #dcdcdc;
}

.zoom {
    width: 12px;
    font-size: 11px;
}

.status input {
    appearance: none;
    width: 66px;
    height: 15px;
    background: linear-gradient(#888, #888) center / 100% 1px no-repeat;
}

.status input::-webkit-slider-thumb {
    appearance: none;
    width: 4px;
    height: 8px;
    background: #555;
}

.percent {
    margin-left: 6px;
}

/* Taskbar */
.taskbar {
    display: flex;
    align-items: center;
    height: 27px;
    flex: none;
    background: #1b1b1b;
    color: #eee;
}

.start {
    width: 31px;
}

.start svg {
    width: 12px;
    height: 12px;
}

.find {
    display: flex;
    align-items: center;
    width: 192px;
    height: 27px;
    padding-left: 8px;
    background: #333;
    font-size: 9px;
}

.lens {
    width: 12px;
    height: 12px;
    margin-right: 6px;
}

.find input {
    flex: 1;
    min-width: 0;
}

.find input::placeholder {
    color: #ccc;
}

.moon {
    width: 54px;
    height: 27px;
}

.app {
    width: 33px;
    height: 27px;
    border-block: 2px solid transparent;
}

.app svg {
    width: 16px;
    height: 16px;
}

.app:nth-of-type(2) svg {
    width: 12px;
    height: 12px;
}

.app.open {
    border-bottom-color: #86b8da;
}

.app.active {
    background: #4a4a4a;
}

.tray {
    display: flex;
    align-items: center;
    gap: 4px;
    margin-left: auto;
    padding-right: 14px;
}

.tray svg {
    width: 12px;
    height: 12px;
    fill: none;
    stroke: #ddd;
}

.tray .faint {
    stroke: #777;
}

.tray time {
    width: 42px;
    margin-left: 3px;
    line-height: 12px;
    text-align: center;
}

.note {
    position: relative;
    display: flex;
    margin-left: 6px;
}

.note b {
    position: absolute;
    top: 4px;
    left: 5px;
    width: 11px;
    height: 11px;
    border: 1px solid #999;
    border-radius: 50%;
    background: #222;
    line-height: 9px;
    text-align: center;
}
```
